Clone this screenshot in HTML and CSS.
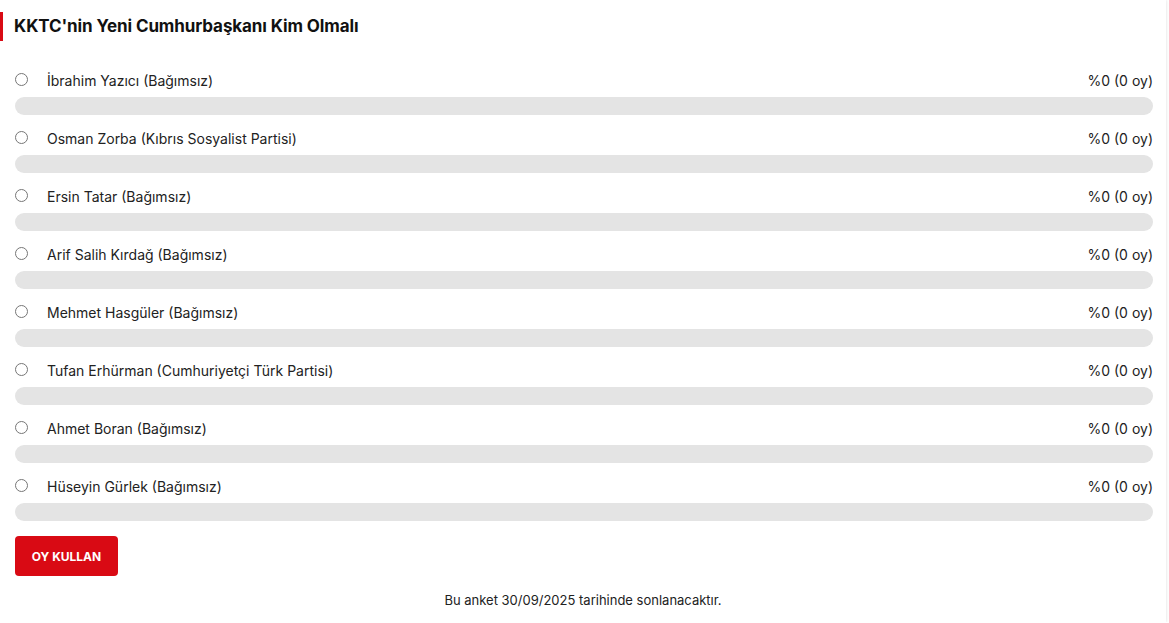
FILE: index.html
```html
<!DOCTYPE html>
<html lang="tr">
  <head>
    <meta charset="UTF-8" />
    <meta name="viewport" content="width=device-width, initial-scale=1.0" />
    <title>Anket</title>
    <link rel="stylesheet" href="styles.css">
  </head>
  <body>
    <div class="poll-card">
      <h2 class="poll-title">KKTC'nin Yeni Cumhurbaşkanı Kim Olmalı</h2>
      <form id="pollForm" class="poll-form">
        <div class="option">
          <div class="option-head">
            <label><input type="radio" name="aday" value="1" /><span>İbrahim Yazıcı (Bağımsız)</span></label>
            <span class="result">%0 (0 oy)</span>
          </div>
          <div class="bar"><div class="bar-fill" style="width: 0%"></div></div>
        </div>
        <div class="option">
          <div class="option-head">
            <label><input type="radio" name="aday" value="2" /><span>Osman Zorba (Kıbrıs Sosyalist Partisi)</span></label>
            <span class="result">%0 (0 oy)</span>
          </div>
          <div class="bar"><div class="bar-fill" style="width: 0%"></div></div>
        </div>
        <div class="option">
          <div class="option-head">
            <label><input type="radio" name="aday" value="3" /><span>Ersin Tatar (Bağımsız)</span></label>
            <span class="result">%0 (0 oy)</span>
          </div>
          <div class="bar"><div class="bar-fill" style="width: 0%"></div></div>
        </div>
        <div class="option">
          <div class="option-head">
            <label><input type="radio" name="aday" value="4" /><span>Arif Salih Kırdağ (Bağımsız)</span></label>
            <span class="result">%0 (0 oy)</span>
          </div>
          <div class="bar"><div class="bar-fill" style="width: 0%"></div></div>
        </div>
        <div class="option">
          <div class="option-head">
            <label><input type="radio" name="aday" value="5" /><span>Mehmet Hasgüler (Bağımsız)</span></label>
            <span class="result">%0 (0 oy)</span>
          </div>
          <div class="bar"><div class="bar-fill" style="width: 0%"></div></div>
        </div>
        <div class="option">
          <div class="option-head">
            <label><input type="radio" name="aday" value="6" /><span>Tufan Erhürman (Cumhuriyetçi Türk Partisi)</span></label>
            <span class="result">%0 (0 oy)</span>
          </div>
          <div class="bar"><div class="bar-fill" style="width: 0%"></div></div>
        </div>
        <div class="option">
          <div class="option-head">
            <label><input type="radio" name="aday" value="7" /><span>Ahmet Boran (Bağımsız)</span></label>
            <span class="result">%0 (0 oy)</span>
          </div>
          <div class="bar"><div class="bar-fill" style="width: 0%"></div></div>
        </div>
        <div class="option">
          <div class="option-head">
            <label><input type="radio" name="aday" value="8" /><span>Hüseyin Gürlek (Bağımsız)</span></label>
            <span class="result">%0 (0 oy)</span>
          </div>
          <div class="bar"><div class="bar-fill" style="width: 0%"></div></div>
        </div>
        <button type="submit" class="vote-btn">OY KULLAN</button>
      </form>
      <p class="poll-note">Bu anket 30/09/2025 tarihinde sonlanacaktır.</p>
    </div>
  </body>
</html>
```

FILE: styles.css
```css
body {
  font-family: Inter, "Noto Sans", Arial, sans-serif;
  margin: 0;
  padding: 0;
  background-color: #fff;
  color: #222;
}
.poll-card {
  width: 1166px;
  box-sizing: border-box;
  padding: 12px 0 0 0;
  height: 622px;
  background: #fff;
  box-shadow: 0 0 3px rgba(0, 0, 0, 0.15);
}
.poll-title {
  margin: 0 0 29px 0;
  height: 29px;
  line-height: 29px;
  padding-left: 11px;
  border-left: 3px solid #d90a14;
  font-size: 17px;
  font-weight: 700;
  color: #111;
  letter-spacing: -0.1px;
}
.poll-form {
  padding: 0 13px 0 15px;
}
.option {
  margin-bottom: 13px;
}
.option-head {
  display: flex;
  justify-content: space-between;
  align-items: center;
  height: 20px;
  margin-bottom: 7px;
  font-size: 14px;
}
.option-head label {
  display: flex;
  align-items: center;
  cursor: pointer;
}
.option-head input {
  margin: 0 19px 0 0;
  width: 13px;
  height: 13px;
  position: relative;
  top: -1px;
}
.result {
  color: #222;
}
.bar {
  height: 18px;
  border-radius: 9px;
  background: #e4e4e4;
  overflow: hidden;
}
.bar-fill {
  height: 100%;
  background: #d90a14;
}
.vote-btn {
  margin-top: 2px;
  width: 103px;
  height: 40px;
  background: #d90a14;
  color: #fff;
  border: none;
  border-radius: 4px;
  font-family: Inter, Arial, sans-serif;
  font-size: 12px;
  font-weight: 700;
  cursor: pointer;
}
.poll-note {
  margin: 16px 0 0 0;
  text-align: center;
  font-size: 13px;
  line-height: 16px;
  color: #222;
}
```
